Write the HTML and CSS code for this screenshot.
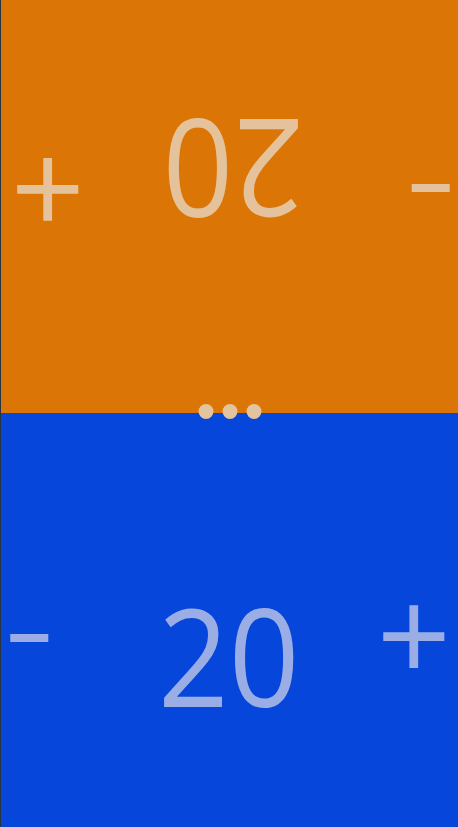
FILE: index.html
```html
<!DOCTYPE html>
<html lang="en">
<head>
<meta charset="utf-8">
<title>Counter</title>
<link rel="stylesheet" href="styles.css">
</head>
<body>
<main class="app">
  <section class="panel panel-top">
    <div class="counter">
      <button class="btn btn-minus" type="button">-</button>
      <span class="count">20</span>
      <button class="btn btn-plus" type="button">+</button>
    </div>
  </section>
  <section class="panel panel-bottom">
    <div class="counter">
      <button class="btn btn-minus" type="button">-</button>
      <span class="count">20</span>
      <button class="btn btn-plus" type="button">+</button>
    </div>
  </section>
  <div class="menu-dots" aria-label="menu">
    <span class="dot"></span><span class="dot"></span><span class="dot"></span>
  </div>
</main>
</body>
</html>
```

FILE: styles.css
```css
html, body {
  margin: 0;
  padding: 0;
  height: 100%;
}
body {
  background: #27343f;
  font-family: "Open Sans", "Liberation Sans", sans-serif;
  overflow: hidden;
}
.app {
  position: relative;
  margin-left: 1px;
  height: 827px;
  display: grid;
  grid-template-rows: 413px 1fr;
}
.panel {
  display: flex;
  flex-direction: column;
  padding-top: 135px;
  box-sizing: border-box;
}
.panel-top {
  background: #db7606;
  color: #e4c29b;
  transform: rotate(180deg);
}
.panel-bottom {
  background: #0646da;
  color: #9aaee5;
}
.counter {
  display: grid;
  grid-template-columns: 1fr auto 1fr;
  align-items: start;
  padding: 0 7px 0 3px;
}
.panel-top .counter {
  padding: 0 9.5px 0 2px;
}
.btn {
  background: none;
  border: 0;
  padding: 0;
  margin: 0;
  color: inherit;
  font-family: inherit;
  line-height: 1;
  cursor: pointer;
}
.btn-minus {
  justify-self: start;
  font-size: 112px;
  margin-top: 21px;
  transform: scaleX(1.4);
  transform-origin: left center;
}
.btn-plus {
  justify-self: end;
  font-size: 130px;
  margin-top: 20px;
}
.count {
  font-size: 136px;
  line-height: 1;
  margin-top: 39px;
  transform: scaleX(0.91);
}
.panel-bottom .count {
  margin-left: 3px;
}
.menu-dots {
  position: absolute;
  top: 404px;
  left: 50%;
  transform: translateX(-50%);
  display: flex;
  gap: 9px;
}
.dot {
  width: 15px;
  height: 15px;
  border-radius: 50%;
  background: #e3c49f;
}
```
